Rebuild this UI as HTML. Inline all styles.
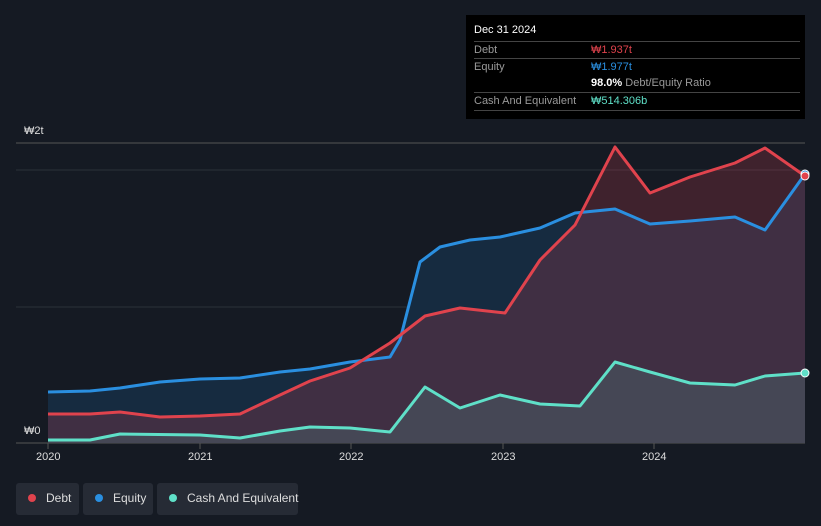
<!DOCTYPE html><html><head><style>
body{margin:0;width:821px;height:526px;background:#151a23;font-family:"Liberation Sans",sans-serif;overflow:hidden;position:relative}
.tip{position:absolute;left:466px;top:15px;width:339px;height:104px;background:#000;color:#fff;font-size:11px}
.row{position:absolute;left:8px;width:326px;border-top:1px solid #444;height:17px;line-height:17px;color:#9a9a9a}
.v{position:absolute;left:117px}
.leg{position:absolute;top:483px;height:32px;background:#262b35;border-radius:3px;color:#ddd;font-size:12px;line-height:30px;white-space:nowrap}
.leg i{display:inline-block;width:8px;height:8px;border-radius:50%;margin:0 10px 0 12px}
.ax{position:absolute;color:#ddd;font-size:11px}
</style></head><body>
<svg width="821" height="526" style="position:absolute;left:0;top:0">
<line x1="16" y1="143" x2="805" y2="143" stroke="#555" />
<line x1="16" y1="170" x2="805" y2="170" stroke="#2c313a"/>
<line x1="16" y1="307" x2="805" y2="307" stroke="#2c313a"/>
<line x1="16" y1="443" x2="805" y2="443" stroke="#555"/>
<path d="M48,392 L90,391 120,388 160,382 200,379 240,378 280,372 310,369 350,362 390,357 400,340 420,262 440,247 470,240 500,237 540,228 575,213 615,209 650,224 690,221 735,217 765,230 805,174 L805,443 48,443Z" fill="#162b40"/>
<path d="M48,414 L90,414 120,412 160,417 200,416 240,414 280,395 310,381 350,368 390,343 425,316 460,308 505,313 540,260 575,225 615,147 650,193 690,177 735,163 765,148 805,176 L805,443 48,443Z" fill="rgba(190,60,75,0.25)"/>
<path d="M48,440 L90,440 120,434 200,435 240,438 280,431 310,427 350,428 390,432 425,387 460,408 500,395 540,404 580,406 615,362 650,372 690,383 735,385 765,376 805,373 L805,443 48,443Z" fill="rgba(90,170,160,0.2)"/>
<g fill="none" stroke-width="3" stroke-linejoin="round">
<polyline stroke="#2a8fe0" points="48,392 90,391 120,388 160,382 200,379 240,378 280,372 310,369 350,362 390,357 400,340 420,262 440,247 470,240 500,237 540,228 575,213 615,209 650,224 690,221 735,217 765,230 805,174"/>
<polyline stroke="#e0434d" points="48,414 90,414 120,412 160,417 200,416 240,414 280,395 310,381 350,368 390,343 425,316 460,308 505,313 540,260 575,225 615,147 650,193 690,177 735,163 765,148 805,176"/>
<polyline stroke="#5fe0c8" points="48,440 90,440 120,434 200,435 240,438 280,431 310,427 350,428 390,432 425,387 460,408 500,395 540,404 580,406 615,362 650,372 690,383 735,385 765,376 805,373"/>
</g>
<circle cx="805" cy="174" r="4" fill="#2a8fe0" stroke="#fff"/>
<circle cx="805" cy="176" r="4" fill="#e0434d" stroke="#fff"/>
<circle cx="805" cy="373" r="4" fill="#5fe0c8" stroke="#fff"/>
<g stroke="#555"><line x1="48" y1="443" x2="48" y2="449"/><line x1="200" y1="443" x2="200" y2="449"/><line x1="351" y1="443" x2="351" y2="449"/><line x1="503" y1="443" x2="503" y2="449"/><line x1="654" y1="443" x2="654" y2="449"/></g>
</svg>
<div class="ax" style="left:24px;top:125px">₩2t</div>
<div class="ax" style="left:24px;top:425px">₩0</div>
<div class="ax" style="left:36px;top:451px">2020</div>
<div class="ax" style="left:188px;top:451px">2021</div>
<div class="ax" style="left:339px;top:451px">2022</div>
<div class="ax" style="left:491px;top:451px">2023</div>
<div class="ax" style="left:642px;top:451px">2024</div>
<div class="tip">
<div style="position:absolute;left:8px;top:9px">Dec 31 2024</div>
<div class="row" style="top:26px">Debt<span class="v" style="color:#e0434d">₩1.937t</span></div>
<div class="row" style="top:43px">Equity<span class="v" style="color:#2a8fe0">₩1.977t</span></div>
<div class="row" style="top:60px;border:none"><span class="v"><b style="color:#fff">98.0%</b> Debt/Equity Ratio</span></div>
<div class="row" style="top:77px">Cash And Equivalent<span class="v" style="color:#5fe0c8">₩514.306b</span></div>
<div class="row" style="top:95px;height:0"></div>
</div>
<div class="leg" style="left:16px;width:63px"><i style="background:#e0434d"></i>Debt</div>
<div class="leg" style="left:83px;width:70px"><i style="background:#2a8fe0"></i>Equity</div>
<div class="leg" style="left:157px;width:141px"><i style="background:#5fe0c8"></i>Cash And Equivalent</div>
</body></html>
